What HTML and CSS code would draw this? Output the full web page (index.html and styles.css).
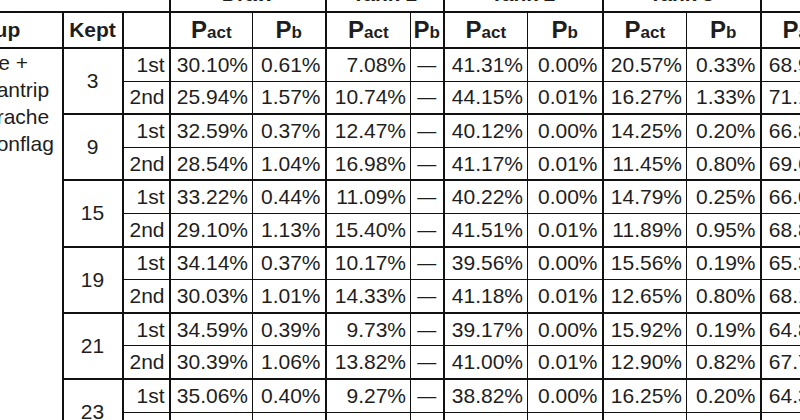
FILE: index.html
```html
<!DOCTYPE html>
<html>
<head>
<meta charset="utf-8">
<link rel="stylesheet" href="styles.css">
</head>
<body>
<table class="grid">
  <colgroup>
    <col class="c-group">
    <col class="c-kept">
    <col class="c-ord">
    <col class="c-d-act">
    <col class="c-d-pb">
    <col class="c-t1-act">
    <col class="c-t1-pb">
    <col class="c-act">
    <col class="c-t2-pb">
    <col class="c-act">
    <col class="c-pb">
    <col class="c-act">
    <col class="c-pb">
  </colgroup>
  <thead>
    <tr class="top">
      <th colspan="3" class="blank"></th>
      <th colspan="2" class="g">Draw</th>
      <th colspan="2" class="g">Tank 1</th>
      <th colspan="2" class="g">Tank 2</th>
      <th colspan="2" class="g">Tank 3</th>
      <th colspan="2" class="g">Tank 4</th>
    </tr>
    <tr class="heads">
      <th class="lbl grp">Group</th>
      <th class="lbl g">Kept</th>
      <th class="g"></th>
      <th class="g">P<span class="sub">act</span></th>
      <th>P<span class="sub">b</span></th>
      <th class="g">P<span class="sub">act</span></th>
      <th>P<span class="sub">b</span></th>
      <th class="g">P<span class="sub">act</span></th>
      <th>P<span class="sub">b</span></th>
      <th class="g">P<span class="sub">act</span></th>
      <th>P<span class="sub">b</span></th>
      <th class="g">P<span class="sub">act</span></th>
      <th>P<span class="sub">b</span></th>
    </tr>
  </thead>
  <tbody>
    <tr class="first">
      <td rowspan="12" class="group"><span class="line">Tie +</span><span class="line">Cantrip</span><span class="line">Drache</span><span class="line">Conflag</span></td>
      <td rowspan="2" class="kept g">3</td>
      <td class="g">1st</td><td class="g">30.10%</td><td>0.61%</td><td class="g">7.08%</td><td class="dash">—</td><td class="g">41.31%</td><td>0.00%</td><td class="g">20.57%</td><td>0.33%</td><td class="g">68.92%</td><td>0.71%</td>
    </tr>
    <tr>
      <td class="g">2nd</td><td class="g">25.94%</td><td>1.57%</td><td class="g">10.74%</td><td class="dash">—</td><td class="g">44.15%</td><td>0.01%</td><td class="g">16.27%</td><td>1.33%</td><td class="g">71.16%</td><td>1.02%</td>
    </tr>
    <tr class="first">
      <td rowspan="2" class="kept g">9</td>
      <td class="g">1st</td><td class="g">32.59%</td><td>0.37%</td><td class="g">12.47%</td><td class="dash">—</td><td class="g">40.12%</td><td>0.00%</td><td class="g">14.25%</td><td>0.20%</td><td class="g">66.81%</td><td>0.42%</td>
    </tr>
    <tr>
      <td class="g">2nd</td><td class="g">28.54%</td><td>1.04%</td><td class="g">16.98%</td><td class="dash">—</td><td class="g">41.17%</td><td>0.01%</td><td class="g">11.45%</td><td>0.80%</td><td class="g">69.65%</td><td>0.88%</td>
    </tr>
    <tr class="first">
      <td rowspan="2" class="kept g">15</td>
      <td class="g">1st</td><td class="g">33.22%</td><td>0.44%</td><td class="g">11.09%</td><td class="dash">—</td><td class="g">40.22%</td><td>0.00%</td><td class="g">14.79%</td><td>0.25%</td><td class="g">66.05%</td><td>0.47%</td>
    </tr>
    <tr>
      <td class="g">2nd</td><td class="g">29.10%</td><td>1.13%</td><td class="g">15.40%</td><td class="dash">—</td><td class="g">41.51%</td><td>0.01%</td><td class="g">11.89%</td><td>0.95%</td><td class="g">68.83%</td><td>0.97%</td>
    </tr>
    <tr class="first">
      <td rowspan="2" class="kept g">19</td>
      <td class="g">1st</td><td class="g">34.14%</td><td>0.37%</td><td class="g">10.17%</td><td class="dash">—</td><td class="g">39.56%</td><td>0.00%</td><td class="g">15.56%</td><td>0.19%</td><td class="g">65.31%</td><td>0.41%</td>
    </tr>
    <tr>
      <td class="g">2nd</td><td class="g">30.03%</td><td>1.01%</td><td class="g">14.33%</td><td class="dash">—</td><td class="g">41.18%</td><td>0.01%</td><td class="g">12.65%</td><td>0.80%</td><td class="g">68.14%</td><td>0.86%</td>
    </tr>
    <tr class="first">
      <td rowspan="2" class="kept g">21</td>
      <td class="g">1st</td><td class="g">34.59%</td><td>0.39%</td><td class="g">9.73%</td><td class="dash">—</td><td class="g">39.17%</td><td>0.00%</td><td class="g">15.92%</td><td>0.19%</td><td class="g">64.83%</td><td>0.40%</td>
    </tr>
    <tr>
      <td class="g">2nd</td><td class="g">30.39%</td><td>1.06%</td><td class="g">13.82%</td><td class="dash">—</td><td class="g">41.00%</td><td>0.01%</td><td class="g">12.90%</td><td>0.82%</td><td class="g">67.75%</td><td>0.90%</td>
    </tr>
    <tr class="first">
      <td rowspan="2" class="kept g">23</td>
      <td class="g">1st</td><td class="g">35.06%</td><td>0.40%</td><td class="g">9.27%</td><td class="dash">—</td><td class="g">38.82%</td><td>0.00%</td><td class="g">16.25%</td><td>0.20%</td><td class="g">64.34%</td><td>0.42%</td>
    </tr>
    <tr>
      <td class="g">2nd</td><td class="g">30.76%</td><td>1.11%</td><td class="g">13.30%</td><td class="dash">—</td><td class="g">40.75%</td><td>0.01%</td><td class="g">13.24%</td><td>0.95%</td><td class="g">67.30%</td><td>0.93%</td>
    </tr>
  </tbody>
</table>
</body>
</html>
```
FILE: styles.css
```css
html, body {
  margin: 0;
  padding: 0;
  background: #ffffff;
  overflow: hidden;
}

body {
  width: 800px;
  height: 420px;
}

.grid {
  border-collapse: collapse;
  table-layout: fixed;
  width: 993px;
  margin: -24px 0 0 -75px;
  font-family: "Liberation Sans", Arial, sans-serif;
  font-size: 21px;
  color: #1e1e1e;
}

.c-group { width: 137px; }
.c-kept { width: 60px; }
.c-ord { width: 47px; }
.c-d-act { width: 83px; }
.c-d-pb { width: 73px; }
.c-t1-act { width: 85px; }
.c-t1-pb { width: 33px; }
.c-act { width: 84px; }
.c-t2-pb { width: 75px; }
.c-pb { width: 74px; }

.grid th,
.grid td {
  border: 1px solid #111111;
  padding: 0 4px 0 0;
  white-space: nowrap;
  overflow: hidden;
  text-align: right;
}

.grid td {
  height: 31.6px;
}

.grid th {
  text-align: center;
  padding: 0;
  font-weight: bold;
}

.grid .g {
  border-left: 2px solid #111111;
}

.top th {
  height: 34px;
  font-size: 21px;
  border-bottom: 2px solid #111111;
}

.top .blank {
  border-left: none;
}

.heads th {
  height: 34px;
  border-bottom: 2px solid #111111;
  font-size: 24px;
}

.heads .lbl {
  font-size: 21px;
}

.heads .grp {
  padding-right: 10px;
}

.sub {
  font-size: 17px;
}

.first td {
  border-top: 2px solid #111111;
}

.grid .group {
  text-align: left;
  vertical-align: top;
  padding: 0 0 0 56px;
  border: none;
  border-right: 2px solid #111111;
  line-height: 27px;
}

.line {
  display: block;
}

.grid .kept {
  text-align: center;
  padding: 0;
}

.grid .dash {
  text-align: center;
  padding: 0;
  font-size: 19px;
}
```
